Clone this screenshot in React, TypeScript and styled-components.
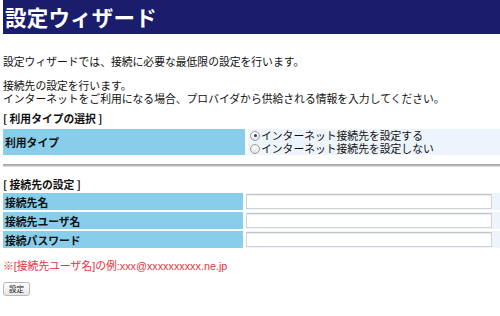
import { ReactElement } from 'react';
import styled, { createGlobalStyle } from 'styled-components';

const GlobalStyle = createGlobalStyle`
  html, body {
    margin: 0;
    padding: 0;
    background: #fff;
  }
  body {
    font-family: 'Noto Sans CJK JP', 'Noto Sans', sans-serif;
    font-size: 10.8px;
    color: #111;
  }
`;

const Page = styled.div`
  width: 497px;
  padding-left: 3px;
  overflow: hidden;
`;

const Header = styled.h1`
  margin: 0;
  height: 34px;
  background: #1a1d6b;
  color: #fff;
  font-size: 21.5px;
  font-weight: bold;
  line-height: 33px;
  padding-left: 2px;
  letter-spacing: 0.2px;
`;

const Para = styled.p<{ $top: number }>`
  margin: ${(p) => p.$top}px 0 0;
  line-height: 13px;
`;

const SectionTitle = styled.div<{ $top: number }>`
  margin-top: ${(p) => p.$top}px;
  font-weight: bold;
  line-height: 13px;
`;

const FormTable = styled.table<{ $top: number }>`
  margin-top: ${(p) => p.$top}px;
  width: 497px;
  border-collapse: separate;
  border-spacing: 0 2px;
  margin-left: 0;
  font-size: 10.8px;
`;

const LabelCell = styled.th<{ $w: number }>`
  width: ${(p) => p.$w}px;
  background: #87ceeb;
  text-align: left;
  font-weight: bold;
  padding: 0 0 0 2px;
  vertical-align: middle;
`;

const Gap = styled.td<{ $w: number }>`
  width: ${(p) => p.$w}px;
  padding: 0;
`;

const ValueCell = styled.td`
  background: #eef4fc;
  padding: 0;
  vertical-align: middle;
`;

const RadioLine = styled.label`
  display: flex;
  align-items: center;
  height: 13px;
  line-height: 13px;
  white-space: nowrap;
`;

const Radio = styled.span<{ $on?: boolean }>`
  width: 8px;
  height: 8px;
  margin: 0 1px 0 2px;
  border-radius: 50%;
  border: 1px solid #9a9a9a;
  background: linear-gradient(#fdfdfd, #e4e4e4);
  display: flex;
  align-items: center;
  justify-content: center;
  &::after {
    content: '';
    width: 3px;
    height: 3px;
    border-radius: 50%;
    background: ${(p) => (p.$on ? '#2a3f66' : 'transparent')};
  }
`;

const RadioCell = styled(ValueCell)`
  height: 26px;
  padding: 0;
`;

const Rule = styled.div`
  margin-top: 7px;
  height: 1px;
  border-top: 1px solid #a4a4a4;
  border-bottom: 1px solid #d8d8d8;
  background: #bdbdbd;
`;

const InputRow = styled.tr`
  height: 17px;
`;

const TextInput = styled.input`
  display: block;
  box-sizing: border-box;
  width: 246px;
  height: 15px;
  margin: 1px 0;
  border: 1px solid #d2d2d2;
  border-top-color: #c4c4c4;
  box-shadow: inset 0 1px 1px rgba(0, 0, 0, 0.08);
  background: #fff;
  padding: 0 2px;
  font-size: 10px;
  outline: none;
`;

const Note = styled.div`
  margin-top: 10px;
  color: #e5333b;
  line-height: 13px;
  font-family: 'Liberation Sans', 'Noto Sans CJK JP', sans-serif;
  font-size: 10.8px;
`;

const SubmitButton = styled.button`
  margin-top: 9px;
  display: block;
  width: 27px;
  height: 14px;
  padding: 0;
  border: 1px solid #b8b8b8;
  border-radius: 3px;
  background: linear-gradient(#ffffff, #e6e6e6);
  font-family: 'Noto Sans CJK JP', sans-serif;
  font-size: 7.5px;
  line-height: 12px;
  color: #222;
`;

const fields = ['接続先名', '接続先ユーザ名', '接続パスワード'];

const App = (): ReactElement => {
  return (
    <Page>
      <GlobalStyle />
      <Header>設定ウィザード</Header>
      <Para $top={21}>設定ウィザードでは、接続に必要な最低限の設定を行います。</Para>
      <Para $top={11}>
        接続先の設定を行います。
        <br />
        インターネットをご利用になる場合、プロバイダから供給される情報を入力してください。
      </Para>
      <SectionTitle $top={7}>[ 利用タイプの選択 ]</SectionTitle>
      <FormTable $top={2}>
        <tbody>
          <tr>
            <LabelCell $w={240}>利用タイプ</LabelCell>
            <Gap $w={3} />
            <RadioCell>
              <RadioLine>
                <Radio $on />
                インターネット接続先を設定する
              </RadioLine>
              <RadioLine>
                <Radio />
                インターネット接続先を設定しない
              </RadioLine>
            </RadioCell>
          </tr>
        </tbody>
      </FormTable>
      <Rule />
      <SectionTitle $top={11}>[ 接続先の設定 ]</SectionTitle>
      <FormTable $top={0}>
        <tbody>
          {fields.map((f) => (
            <InputRow key={f}>
              <LabelCell $w={238}>{f}</LabelCell>
              <Gap $w={3} />
              <ValueCell>
                <TextInput type="text" />
              </ValueCell>
            </InputRow>
          ))}
        </tbody>
      </FormTable>
      <Note>※[接続先ユーザ名]の例:xxx@xxxxxxxxxx.ne.jp</Note>
      <SubmitButton type="button">設定</SubmitButton>
    </Page>
  );
};

export default App;
